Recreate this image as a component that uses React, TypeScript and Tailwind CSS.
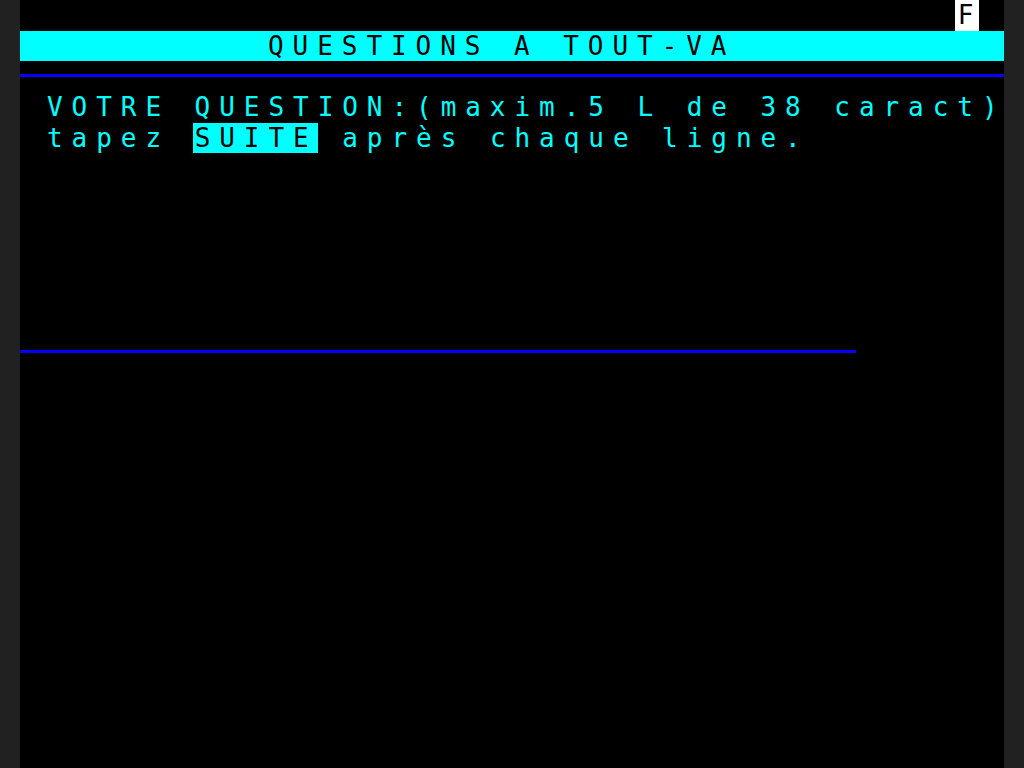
import React from "react";

const font =
  "font-['DejaVu_Sans_Mono',monospace] text-[26px] leading-[30.72px] tracking-[8.95px] whitespace-pre";

export default function App() {
  return (
    <div className="flex h-[768px] w-[1024px] bg-[#212121] overflow-hidden">
      <div className={`ml-[20px] flex h-[768px] w-[984px] flex-col bg-black ${font}`}>
        {/* row 0 */}
        <div className="flex h-[30.72px]">
          <div className="ml-[934.8px] h-[30.72px] w-[24.6px] bg-white pl-[3px] tracking-normal text-black">F</div>
        </div>
        {/* row 1 */}
        <div className="h-[30.72px] bg-[#00ffff] pl-[248px] text-black">QUESTIONS A TOUT-VA</div>
        {/* row 2 */}
        <div className="h-[30.72px]">
          <div className="mt-[12.5px] h-[3px] w-full bg-[#0000ff]" />
        </div>
        {/* row 3 */}
        <div className="h-[30.72px] pl-[27px] text-[#00ffff]">VOTRE QUESTION:(maxim.5 L de 38 caract)</div>
        {/* row 4 */}
        <div className="h-[30.72px] pl-[27px] text-[#00ffff]">
          tapez <span className="-ml-[2px] bg-[#00ffff] pl-[2px] text-black">SUITE</span> après chaque ligne.
        </div>
        {/* rows 5-10 */}
        <div className="h-[184.32px]" />
        {/* row 11 */}
        <div className="h-[30.72px]">
          <div className="mt-[12px] h-[3px] w-[836px] bg-[#0000ff]" />
        </div>
        <div className="flex-1" />
      </div>
    </div>
  );
}
